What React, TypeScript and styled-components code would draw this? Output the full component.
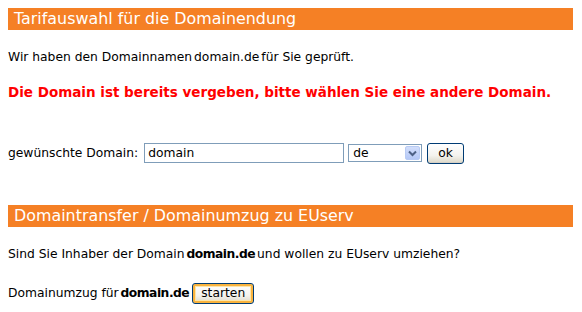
import React from "react";
import styled, { createGlobalStyle } from "styled-components";

const GlobalStyle = createGlobalStyle`
  body {
    margin: 8px;
    background: #fff;
    font-family: "DejaVu Sans", Verdana, sans-serif;
    font-size: 12.3px;
    color: #000;
  }
`;

export default function App() {
  return (
    <>
      <GlobalStyle />
      <Page>
        <SectionBar>Tarifauswahl für die Domainendung</SectionBar>
        <Text top={20}>
          Wir haben den Domainnamen <Domain>domain.de</Domain> für Sie geprüft.
        </Text>
        <ErrorText>
          Die Domain ist bereits vergeben, bitte wählen Sie eine andere Domain.
        </ErrorText>
        <FormRow top={42}>
          <Label gap={2}>gewünschte Domain:</Label>
          <TextInput defaultValue="domain" />
          <SelectBox>
            <select defaultValue="de">
              <option value="de">de</option>
              <option value="com">com</option>
              <option value="net">net</option>
            </select>
            <ArrowButton>
              <svg width="9" height="7" viewBox="0 0 9 7">
                <path
                  d="M1 1.5 L4.5 5 L8 1.5"
                  fill="none"
                  stroke="#4d6185"
                  strokeWidth="2"
                />
              </svg>
            </ArrowButton>
          </SelectBox>
          <Button>ok</Button>
        </FormRow>
        <SectionBar top={41}>Domaintransfer / Domainumzug zu EUserv</SectionBar>
        <Text top={20}>
          Sind Sie Inhaber der Domain <Domain bold>domain.de</Domain> und
          wollen zu EUserv umziehen?
        </Text>
        <FormRow top={21}>
          <Label>
            Domainumzug für <Domain bold>domain.de</Domain>
          </Label>
          <Button focused>starten</Button>
        </FormRow>
      </Page>
    </>
  );
}

interface SpacingProps {
  top?: number;
}
interface LabelProps {
  gap?: number;
}
interface DomainProps {
  bold?: boolean;
}
interface ButtonProps {
  focused?: boolean;
}

const Page = styled.div`
  width: 565px;
  display: flex;
  flex-direction: column;
`;
const SectionBar = styled.div<SpacingProps>`
  background: #f58025;
  color: #fff;
  font-size: 15.9px;
  height: 22px;
  line-height: 22px;
  padding-left: 6px;
  margin-top: ${(p) => p.top || 0}px;
  white-space: nowrap;
`;
const Text = styled.div<SpacingProps>`
  line-height: 14px;
  margin-top: ${(p) => p.top || 0}px;
  white-space: nowrap;
`;
const Domain = styled.span<DomainProps>`
  font-weight: ${(p) => (p.bold ? "bold" : "normal")};
  letter-spacing: ${(p) => (p.bold ? "-0.5px" : "0")};
  margin: 0 -2px;
`;
const ErrorText = styled.div`
  color: #ff0000;
  font-weight: bold;
  font-size: 13.5px;
  line-height: 16px;
  margin-top: 20px;
  white-space: nowrap;
`;
const FormRow = styled.div<SpacingProps>`
  display: flex;
  align-items: center;
  gap: 4px;
  height: 22px;
  margin-top: ${(p) => p.top || 0}px;
  white-space: nowrap;
`;
const Label = styled.span<LabelProps>`
  margin-right: ${(p) => p.gap || 0}px;
`;
const TextInput = styled.input`
  box-sizing: border-box;
  width: 200px;
  height: 20px;
  border: 1px solid #7f9db9;
  padding: 0 3px;
  font-family: "DejaVu Sans", Verdana, sans-serif;
  font-size: 12.3px;
  outline: none;
`;
const SelectBox = styled.div`
  box-sizing: border-box;
  display: flex;
  align-items: stretch;
  width: 74px;
  height: 18px;
  border: 1px solid #7f9db9;
  padding: 1px;
  > select {
    appearance: none;
    flex: 1;
    min-width: 0;
    border: 0;
    padding: 0 3px;
    background: #fff;
    font-family: "DejaVu Sans", Verdana, sans-serif;
    font-size: 12.3px;
    outline: none;
  }
`;
const ArrowButton = styled.span`
  width: 15px;
  display: flex;
  align-items: center;
  justify-content: center;
  background: linear-gradient(#d2defb, #b4c8f6);
  border: 1px solid #b8cbf4;
  box-sizing: border-box;
  border-radius: 2px;
`;
const Button = styled.button<ButtonProps>`
  box-sizing: border-box;
  height: 21px;
  margin-left: 1px;
  padding: 0 ${(p) => (p.focused ? 8 : 10)}px;
  border: 1px solid #003c74;
  border-radius: 3px;
  background: linear-gradient(#ffffff, #f4f3ee 60%, #dcd8c8);
  box-shadow: ${(p) =>
    p.focused
      ? "inset 0 0 0 2px #f9b33e, inset 0 0 0 3px #fde5a8"
      : "inset 0 -1px 0 #d6d0c5"};
  font-family: "DejaVu Sans", Verdana, sans-serif;
  font-size: 12.3px;
  color: #000;
`;
